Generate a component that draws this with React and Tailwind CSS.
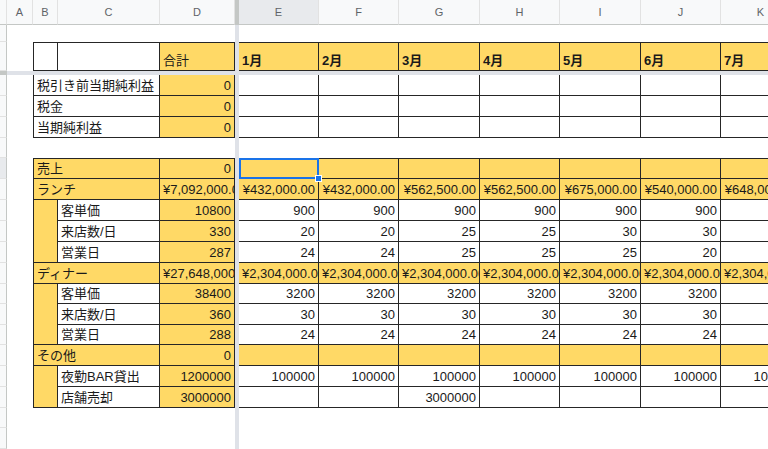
import React from 'react';

const FONT = "font-['Liberation_Sans','Noto_Sans_CJK_JP',sans-serif]";
const LINE = 'border-[#262626]';
const YELLOW = 'bg-[#ffd966]';
const WHITE = 'bg-white';
const RIGHT_W = ['w-[80px]', 'w-[80px]', 'w-[81px]', 'w-[80px]', 'w-[81px]', 'w-[80px]', 'w-[80px]'];
const LETTERS = ['E', 'F', 'G', 'H', 'I', 'J', 'K'];
const MONTHS = ['1月', '2月', '3月', '4月', '5月', '6月', '7月'];
const blank = ['', '', '', '', '', '', ''];
const fill = (v) => [v, v, v, v, v, v, v];

// rows below the frozen line, top to bottom
const ROWS = [
  { h: 'h-[21px]', kind: 'merged', label: '税引き前当期純利益', total: '0', bg: WHITE, vals: blank },
  { h: 'h-[21px]', kind: 'merged', label: '税金', total: '0', bg: WHITE, vals: blank },
  { h: 'h-[21px]', kind: 'merged', label: '当期純利益', total: '0', bg: WHITE, vals: blank },
  { h: 'h-[20px]', kind: 'empty' },
  { h: 'h-[21px]', kind: 'merged', top: true, selected: true, label: '売上', total: '0', bg: YELLOW, vals: blank },
  {
    h: 'h-[21px]', kind: 'merged', label: 'ランチ', total: '¥7,092,000.00', bg: YELLOW,
    vals: ['¥432,000.00', '¥432,000.00', '¥562,500.00', '¥562,500.00', '¥675,000.00', '¥540,000.00', '¥648,000.00'],
  },
  { h: 'h-[21px]', kind: 'sub', label: '客単価', total: '10800', vals: fill('900') },
  { h: 'h-[21px]', kind: 'sub', label: '来店数/日', total: '330', vals: ['20', '20', '25', '25', '30', '30', '30'] },
  { h: 'h-[21px]', kind: 'sub', last: true, label: '営業日', total: '287', vals: ['24', '24', '25', '25', '25', '20', '24'] },
  { h: 'h-[21px]', kind: 'merged', label: 'ディナー', total: '¥27,648,000.00', bg: YELLOW, vals: fill('¥2,304,000.00') },
  { h: 'h-[20px]', kind: 'sub', label: '客単価', total: '38400', vals: fill('3200') },
  { h: 'h-[21px]', kind: 'sub', label: '来店数/日', total: '360', vals: fill('30') },
  { h: 'h-[20px]', kind: 'sub', last: true, label: '営業日', total: '288', vals: fill('24') },
  { h: 'h-[21px]', kind: 'merged', label: 'その他', total: '0', bg: YELLOW, vals: blank },
  { h: 'h-[21px]', kind: 'sub', label: '夜勤BAR貸出', total: '1200000', vals: fill('100000') },
  { h: 'h-[21px]', kind: 'sub', last: true, label: '店舗売却', total: '3000000', vals: ['', '', '3000000', '', '', '', ''] },
  { h: 'h-[20px]', kind: 'empty' },
  { h: 'h-[21px]', kind: 'empty' },
];

// long yen values don't fit, sheets shows them from the left and cuts them
const isClipped = (v) => v.startsWith('¥') && v.length >= 13;

const Cell = ({ w, bg, b, right, bold, children, className = '' }) => (
  <div
    className={`${w} ${bg} ${b} ${LINE} shrink-0 box-border flex items-end overflow-hidden whitespace-nowrap px-[3px] pb-[2px] text-[13px] leading-[15px] text-[#1a1a1a] ${
      right ? 'justify-end' : 'justify-start'
    } ${bold ? 'font-bold' : ''} ${className}`}
  >
    {children}
  </div>
);

const NumCell = ({ w, bg, b, value, children }) => (
  <Cell w={w} bg={bg} b={b} right={!isClipped(value)} className={children ? 'relative overflow-visible' : ''}>
    {value}
    {children}
  </Cell>
);

const RowHead = ({ dark }) => (
  <div
    className={`w-[7px] shrink-0 box-border border-r border-b border-r-[#c4c7c5] border-b-[#e2e2e2] ${
      dark ? 'bg-[#e8eaed]' : 'bg-[#f8f9fa]'
    }`}
  />
);

const Gap = () => <div className="w-[26px] shrink-0" />;
const Frozen = () => <div className="w-[4px] shrink-0 bg-[#dfe2e8]" />;

const Selection = () => (
  <>
    <div className="absolute -top-px left-0 -right-px -bottom-px border-2 border-[#1a73e8] z-10" />
    <div className="absolute -right-[4px] -bottom-[4px] w-[7px] h-[7px] bg-[#1a73e8] border border-white z-20" />
  </>
);

const EmptyRow = ({ h }) => (
  <div className={`flex ${h}`}>
    <RowHead />
    <div className="w-[228px] shrink-0" />
    <Frozen />
  </div>
);

const DataRow = ({ row }) => {
  if (row.kind === 'empty') return <EmptyRow h={row.h} />;

  const rightBorder = row.top ? 'border-r border-b border-t' : 'border-r border-b';
  const rightBg = row.kind === 'sub' ? WHITE : row.bg;

  return (
    <div className={`flex ${row.h}`}>
      <RowHead dark={row.selected} />
      <Gap />
      {row.kind === 'merged' ? (
        <Cell w="w-[127px]" bg={row.bg} b={row.top ? 'border-l border-r border-b border-t' : 'border-l border-r border-b'}>
          {row.label}
        </Cell>
      ) : (
        <>
          <Cell w="w-[25px]" bg={YELLOW} b={row.last ? 'border-l border-r border-b' : 'border-l border-r'} />
          <Cell w="w-[102px]" bg={WHITE} b="border-r border-b">
            {row.label}
          </Cell>
        </>
      )}
      <NumCell w="w-[75px]" bg={YELLOW} b={rightBorder} value={row.total} />
      <Frozen />
      {row.vals.map((v, i) => (
        <NumCell key={i} w={RIGHT_W[i]} bg={rightBg} b={rightBorder} value={v}>
          {row.selected && i === 0 ? <Selection /> : null}
        </NumCell>
      ))}
    </div>
  );
};

const ColHead = ({ w, label, active }) => (
  <div
    className={`${w} shrink-0 box-border flex items-center justify-center border-r border-b border-r-[#e2e2e2] border-b-[#c4c7c5] text-[11px] text-[#5f6368] ${
      active ? 'bg-[#e8eaed]' : 'bg-[#f8f9fa]'
    }`}
  >
    {label}
  </div>
);

export default function App() {
  return (
    <div className={`w-[768px] h-[449px] overflow-hidden bg-white ${FONT}`}>
      {/* column letters */}
      <div className="flex h-[25px]">
        <ColHead w="w-[7px]" label="" />
        <ColHead w="w-[26px]" label="A" />
        <ColHead w="w-[25px]" label="B" />
        <ColHead w="w-[102px]" label="C" />
        <ColHead w="w-[75px]" label="D" />
        <div className="w-[4px] shrink-0 bg-[#c4c7c5]" />
        {LETTERS.map((l, i) => (
          <ColHead key={l} w={RIGHT_W[i]} label={l} active={i === 0} />
        ))}
      </div>

      {/* row 1 */}
      <EmptyRow h="h-[17px]" />

      {/* row 2: header */}
      <div className="flex h-[29px]">
        <RowHead />
        <Gap />
        <Cell w="w-[25px]" bg={WHITE} b="border-l border-r border-b border-t" />
        <Cell w="w-[102px]" bg={WHITE} b="border-r border-b border-t" />
        <Cell w="w-[75px]" bg={YELLOW} b="border-r border-b border-t">
          合計
        </Cell>
        <Frozen />
        {MONTHS.map((m, i) => (
          <Cell key={m} w={RIGHT_W[i]} bg={YELLOW} b="border-r border-b border-t" bold>
            {m}
          </Cell>
        ))}
      </div>

      {/* frozen row line */}
      <div className="flex h-[4px]">
        <div className="w-[7px] shrink-0 bg-[#c4c7c5]" />
        <div className="flex-1 bg-[#dfe2e8]" />
      </div>

      {ROWS.map((row, i) => (
        <DataRow key={i} row={row} />
      ))}
    </div>
  );
}
